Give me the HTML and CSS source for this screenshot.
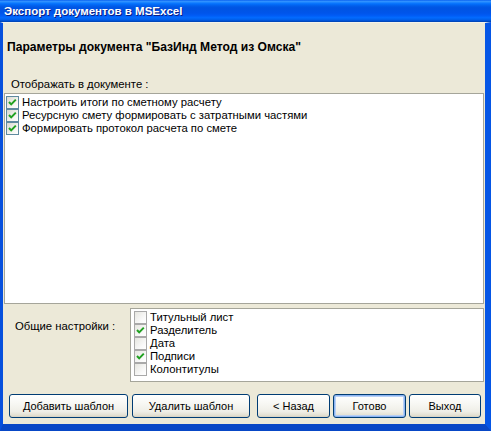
FILE: index.html
```html
<!DOCTYPE html>
<html lang="ru">
<head>
<meta charset="utf-8">
<title>Экспорт документов в MSExcel</title>
<link rel="stylesheet" href="styles.css">
</head>
<body>
<div class="window">
  <div class="titlebar">Экспорт документов в MSExcel</div>
  <div class="client">
    <div class="header">Параметры документа "БазИнд Метод из Омска"</div>
    <div class="section-label">Отображать в документе :</div>
    <div class="listbox main-list">
      <div class="item"><span class="cb checked"><svg viewBox="0 0 11 11"><polyline points="2,5 4.2,7.4 8.8,2.6"/></svg></span><span>Настроить итоги по сметному расчету</span></div>
      <div class="item"><span class="cb checked"><svg viewBox="0 0 11 11"><polyline points="2,5 4.2,7.4 8.8,2.6"/></svg></span><span>Ресурсную смету формировать с затратными частями</span></div>
      <div class="item"><span class="cb checked"><svg viewBox="0 0 11 11"><polyline points="2,5 4.2,7.4 8.8,2.6"/></svg></span><span>Формировать протокол расчета по смете</span></div>
    </div>
    <div class="settings">
      <div class="settings-label">Общие настройки :</div>
      <div class="listbox settings-list">
        <div class="item"><span class="cb flat"></span><span>Титульный лист</span></div>
        <div class="item"><span class="cb flat checked"><svg viewBox="0 0 11 11"><polyline points="2,5 4.2,7.4 8.8,2.6"/></svg></span><span>Разделитель</span></div>
        <div class="item"><span class="cb flat"></span><span>Дата</span></div>
        <div class="item"><span class="cb flat checked"><svg viewBox="0 0 11 11"><polyline points="2,5 4.2,7.4 8.8,2.6"/></svg></span><span>Подписи</span></div>
        <div class="item"><span class="cb flat"></span><span>Колонтитулы</span></div>
      </div>
    </div>
    <div class="buttons">
      <div class="btn-group left">
        <button class="btn w119">Добавить шаблон</button>
        <button class="btn w118">Удалить шаблон</button>
      </div>
      <div class="btn-group right">
        <button class="btn w73">&lt; Назад</button>
        <button class="btn w73 default">Готово</button>
        <button class="btn w72">Выход</button>
      </div>
    </div>
  </div>
</div>
</body>
</html>
```

FILE: styles.css
```css
html, body {
  margin: 0;
  padding: 0;
  width: 491px;
  height: 431px;
  overflow: hidden;
  background: #0054e3;
}

.window {
  width: 491px;
  height: 431px;
  display: flex;
  flex-direction: column;
  font-family: "Liberation Sans", Arial, sans-serif;
  font-size: 11.3px;
  color: #000;
}

.titlebar {
  height: 22px;
  flex: none;
  box-sizing: border-box;
  padding-left: 4px;
  display: flex;
  align-items: center;
  color: #fff;
  font-weight: bold;
  font-size: 11.5px;
  text-shadow: 1px 1px 0 #0a1e84;
  background: linear-gradient(to bottom, #0058ee 0%, #3593ff 5%, #288eff 9%, #127dff 13%, #036ffc 18%, #0262ee 25%, #0057e5 32%, #0054e3 40%, #0055eb 60%, #005bf5 70%, #026afe 80%, #0062ef 88%, #0052d6 94%, #0040ab 100%);
}

.client {
  flex: 1;
  display: flex;
  flex-direction: column;
  background: #ece9d8;
  border-left: 3px solid #0750dd;
  border-right: 6px solid #0556e6;
  border-bottom: 7px solid #0847c6;
  border-top: 1px solid #f4f2ea;
}

.header {
  height: 47px;
  flex: none;
  padding-left: 4px;
  display: flex;
  align-items: center;
  font-weight: bold;
  font-size: 12.1px;
}

.section-label {
  height: 23px;
  flex: none;
  box-sizing: border-box;
  padding: 7px 0 0 8px;
  line-height: 14px;
}

.listbox {
  background: #fff;
  border: 1px solid #a5a59a;
  box-sizing: border-box;
}

.main-list {
  height: 211px;
  flex: none;
  margin: 0 1px 0 1px;
  padding: 2px 1px;
}

.item {
  height: 13px;
  display: flex;
  align-items: center;
  gap: 3px;
  line-height: 13px;
  white-space: nowrap;
}

.cb {
  width: 13px;
  height: 13px;
  box-sizing: border-box;
  flex: none;
  border: 1px solid #5f8a9f;
  background: linear-gradient(135deg, #d8d8d0 0%, #f4f4ef 60%, #ffffff 100%);
  display: flex;
}

.cb.flat {
  border-color: #a9a9a9;
  background: linear-gradient(135deg, #e6e6e0 0%, #fafafa 70%, #ffffff 100%);
}

.cb svg {
  width: 11px;
  height: 11px;
}

.cb polyline {
  fill: none;
  stroke: #21a121;
  stroke-width: 2;
}

.settings {
  display: flex;
  margin-top: 4px;
  height: 74px;
  flex: none;
}

.settings-label {
  width: 127px;
  flex: none;
  box-sizing: border-box;
  padding: 11px 0 0 12px;
  line-height: 14px;
}

.settings-list {
  flex: 1;
  margin-right: 1px;
  padding: 2px 3px;
}

.buttons {
  display: flex;
  margin-top: 12px;
  padding-left: 6px;
  gap: 7px;
}

.btn-group {
  display: flex;
}

.btn-group.left {
  gap: 4px;
}

.btn-group.right {
  gap: 3px;
}

.btn {
  height: 24px;
  box-sizing: border-box;
  border: 1px solid #003c74;
  border-radius: 3px;
  background: linear-gradient(to bottom, #ffffff 0%, #f7f7f3 40%, #efeee7 75%, #e3e0d2 92%, #d6d0c0 100%);
  font-family: "Liberation Sans", Arial, sans-serif;
  font-size: 11px;
  color: #000;
  padding: 0;
  text-align: center;
}

.btn.default {
  box-shadow: inset 0 0 0 1px #8cb4f2, inset 0 0 0 2px #b8d0f5;
}

.w119 { width: 119px; }
.w118 { width: 118px; }
.w73 { width: 73px; }
.w72 { width: 72px; }
```
